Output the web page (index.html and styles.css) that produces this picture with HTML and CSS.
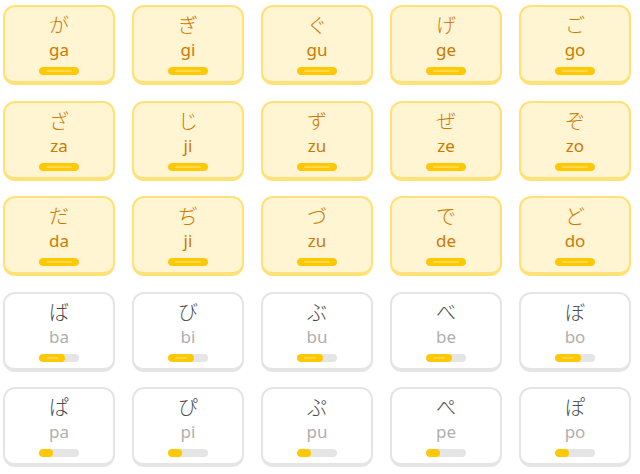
FILE: index.html
```html
<!DOCTYPE html>
<html lang="ja">
<head>
    <meta charset="UTF-8">
    <meta name="viewport" content="width=device-width, initial-scale=1.0">
    <title>Kana</title>
    <link rel="stylesheet" href="styles.css">
</head>
<body>
    <div class="grid">
        <div class="card done"><span class="kana">が</span><span class="romaji">ga</span><div class="bar"><div class="fill" style="width: 100%"></div></div></div>
        <div class="card done"><span class="kana">ぎ</span><span class="romaji">gi</span><div class="bar"><div class="fill" style="width: 100%"></div></div></div>
        <div class="card done"><span class="kana">ぐ</span><span class="romaji">gu</span><div class="bar"><div class="fill" style="width: 100%"></div></div></div>
        <div class="card done"><span class="kana">げ</span><span class="romaji">ge</span><div class="bar"><div class="fill" style="width: 100%"></div></div></div>
        <div class="card done"><span class="kana">ご</span><span class="romaji">go</span><div class="bar"><div class="fill" style="width: 100%"></div></div></div>

        <div class="card done"><span class="kana">ざ</span><span class="romaji">za</span><div class="bar"><div class="fill" style="width: 100%"></div></div></div>
        <div class="card done"><span class="kana">じ</span><span class="romaji">ji</span><div class="bar"><div class="fill" style="width: 100%"></div></div></div>
        <div class="card done"><span class="kana">ず</span><span class="romaji">zu</span><div class="bar"><div class="fill" style="width: 100%"></div></div></div>
        <div class="card done"><span class="kana">ぜ</span><span class="romaji">ze</span><div class="bar"><div class="fill" style="width: 100%"></div></div></div>
        <div class="card done"><span class="kana">ぞ</span><span class="romaji">zo</span><div class="bar"><div class="fill" style="width: 100%"></div></div></div>

        <div class="card done"><span class="kana">だ</span><span class="romaji">da</span><div class="bar"><div class="fill" style="width: 100%"></div></div></div>
        <div class="card done"><span class="kana">ぢ</span><span class="romaji">ji</span><div class="bar"><div class="fill" style="width: 100%"></div></div></div>
        <div class="card done"><span class="kana">づ</span><span class="romaji">zu</span><div class="bar"><div class="fill" style="width: 100%"></div></div></div>
        <div class="card done"><span class="kana">で</span><span class="romaji">de</span><div class="bar"><div class="fill" style="width: 100%"></div></div></div>
        <div class="card done"><span class="kana">ど</span><span class="romaji">do</span><div class="bar"><div class="fill" style="width: 100%"></div></div></div>

        <div class="card"><span class="kana">ば</span><span class="romaji">ba</span><div class="bar"><div class="fill" style="width: 66%"></div></div></div>
        <div class="card"><span class="kana">び</span><span class="romaji">bi</span><div class="bar"><div class="fill" style="width: 66%"></div></div></div>
        <div class="card"><span class="kana">ぶ</span><span class="romaji">bu</span><div class="bar"><div class="fill" style="width: 66%"></div></div></div>
        <div class="card"><span class="kana">べ</span><span class="romaji">be</span><div class="bar"><div class="fill" style="width: 66%"></div></div></div>
        <div class="card"><span class="kana">ぼ</span><span class="romaji">bo</span><div class="bar"><div class="fill" style="width: 66%"></div></div></div>

        <div class="card"><span class="kana">ぱ</span><span class="romaji">pa</span><div class="bar"><div class="fill" style="width: 34%"></div></div></div>
        <div class="card"><span class="kana">ぴ</span><span class="romaji">pi</span><div class="bar"><div class="fill" style="width: 34%"></div></div></div>
        <div class="card"><span class="kana">ぷ</span><span class="romaji">pu</span><div class="bar"><div class="fill" style="width: 34%"></div></div></div>
        <div class="card"><span class="kana">ぺ</span><span class="romaji">pe</span><div class="bar"><div class="fill" style="width: 34%"></div></div></div>
        <div class="card"><span class="kana">ぽ</span><span class="romaji">po</span><div class="bar"><div class="fill" style="width: 34%"></div></div></div>
    </div>
</body>
</html>
```

FILE: styles.css
```css
body {
    margin: 0;
    padding: 0;
    background-color: #fff;
    font-family: "Noto Sans", "Noto Sans CJK JP", sans-serif;
}

.grid {
    display: grid;
    grid-template-columns: repeat(5, 112px);
    grid-auto-rows: 80px;
    column-gap: 17px;
    row-gap: 15.5px;
    padding: 5px 0 0 3px;
}

.card {
    box-sizing: border-box;
    display: flex;
    flex-direction: column;
    align-items: center;
    padding-top: 4px;
    border: 2px solid #e5e5e5;
    border-bottom-width: 4px;
    border-radius: 12px;
    background-color: #fff;
}

.kana {
    font-family: "Noto Sans CJK JP", sans-serif;
    font-size: 20px;
    font-weight: 300;
    line-height: 28px;
    color: #4b4b4b;
}

.romaji {
    font-size: 17px;
    line-height: 22px;
    color: #afafaf;
}

.bar {
    margin-top: 6px;
    width: 40px;
    height: 8px;
    border-radius: 4px;
    background-color: #e5e5e5;
    overflow: hidden;
}

.fill {
    position: relative;
    height: 100%;
    border-radius: 4px;
    background-color: #ffc800;
}

.fill::after {
    content: "";
    position: absolute;
    left: 7px;
    right: 7px;
    top: 3px;
    height: 2px;
    border-radius: 1px;
    background-color: rgba(255, 255, 255, 0.3);
}

.done {
    border-color: #ffe177;
    background-color: #fff5d3;
}

.done .kana,
.done .romaji {
    color: #cd7900;
}
```
